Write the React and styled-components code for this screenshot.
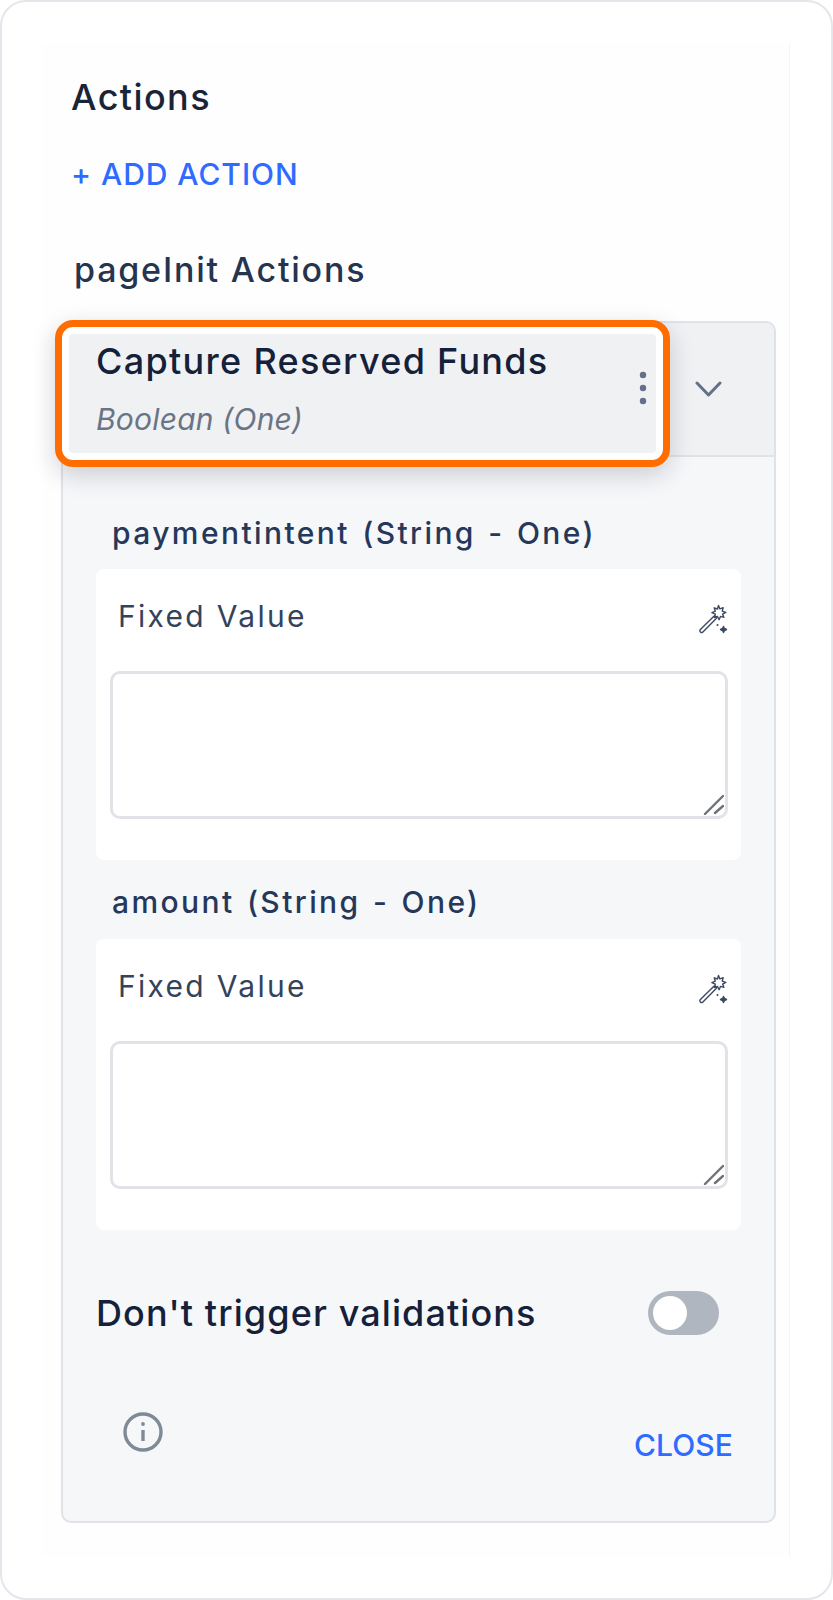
import React from 'react'
import styled, { createGlobalStyle } from 'styled-components'

const GlobalStyle = createGlobalStyle`
  body {
    margin: 0;
    background: #fff;
    font-family: Inter, "Liberation Sans", sans-serif;
  }
`

const Frame = styled.div`
  box-sizing: border-box;
  width: 833px;
  height: 1600px;
  padding: 41px 41px 41px 40px;
  border: 2px solid #e3e6ea;
  border-radius: 26px;
  background: #fff;
`

const Sidebar = styled.aside`
  box-sizing: border-box;
  height: 100%;
  padding: 32px 13px 0 19px;
  background: #fefefe;
  border-right: 1px solid #f3f4f6;
`

const Title = styled.h2`
  margin: 0 0 37px 10px;
  font-size: 36px;
  line-height: 44px;
  font-weight: 450;
  letter-spacing: 1.4px;
  color: #1a2438;
`

const TextButton = styled.button`
  display: block;
  padding: 0;
  border: 0;
  background: none;
  font: inherit;
  font-size: 30px;
  line-height: 36px;
  font-weight: 450;
  letter-spacing: ${({ $wide }) => ($wide ? '0.95px' : '0.1px')};
  color: #2f6bff;
`

const AddButton = styled(TextButton)`
  margin-left: 10px;
`

const Subtitle = styled.h3`
  margin: 58px 0 31px 13px;
  font-size: 34px;
  line-height: 40px;
  font-weight: 450;
  letter-spacing: 1.8px;
  color: #25344f;
`

const Panel = styled.section`
  border: 2px solid #dfe2e7;
  border-radius: 10px;
  background: #f6f7f9;
`

const PanelHeader = styled.header`
  display: flex;
  align-items: flex-start;
  box-sizing: border-box;
  height: 134px;
  padding: 11px 0 0 6px;
  background: #f0f1f3;
  border-bottom: 2px solid #dfe2e7;
  border-radius: 8px 8px 0 0;
`

const ActionRow = styled.div`
  position: relative;
  display: flex;
  align-items: center;
  justify-content: space-between;
  box-sizing: border-box;
  width: 587px;
  height: 119px;
  padding: 5px 9px 16px 27px;
  background: #f0f1f3;
  border-radius: 4px;

  &::after {
    content: '';
    position: absolute;
    inset: -14px;
    border: 7px solid #ff6d00;
    border-radius: 18px;
    box-shadow: 0 8px 24px rgba(15, 23, 42, 0.18), inset 0 0 0 7px #fff;
  }
`

const ActionName = styled.div`
  font-size: 36px;
  line-height: 44px;
  font-weight: 450;
  letter-spacing: 1.3px;
  color: #15213a;
`

const ActionType = styled.div`
  margin-top: 18px;
  font-size: 30px;
  line-height: 36px;
  font-style: italic;
  letter-spacing: 0.2px;
  color: #6b7485;
`

const Chevron = styled.svg`
  margin: 47px 0 0 39px;
`

const PanelBody = styled.div`
  padding: 58px 33px 58px;
`

const FieldLabel = styled.div`
  margin: ${({ $first }) => ($first ? '0 0 18px' : '24px 0 19px')} 16px;
  font-size: 30px;
  line-height: 36px;
  font-weight: 450;
  letter-spacing: 2.4px;
  word-spacing: 2px;
  color: #26385a;
`

const FieldCard = styled.div`
  padding: 29px 13px 41px 14px;
  background: #fff;
  border-radius: 8px;
`

const FieldHead = styled.div`
  display: flex;
  align-items: flex-start;
  justify-content: space-between;
  margin-bottom: 37px;
  padding-left: 8px;
  font-size: 30px;
  line-height: 36px;
  letter-spacing: 2.3px;
  color: #34435c;
`

const WandIcon = styled.svg`
  margin-top: 6px;
`

const AreaWrap = styled.div`
  position: relative;
  height: 148px;
`

const Area = styled.textarea`
  display: block;
  box-sizing: border-box;
  width: 100%;
  height: 100%;
  border: 3px solid #e1e3e8;
  border-radius: 10px;
  background: #fff;
  resize: none;
  outline: none;
`

const Grip = styled.svg`
  position: absolute;
  right: 4px;
  bottom: 4px;
`

const ToggleRow = styled.div`
  display: flex;
  align-items: center;
  justify-content: space-between;
  margin-top: 61px;
  padding-right: 22px;
  font-size: 36px;
  line-height: 44px;
  font-weight: 450;
  letter-spacing: 1.1px;
  color: #15213a;
`

const Toggle = styled.span`
  display: flex;
  align-items: center;
  box-sizing: border-box;
  width: 71px;
  height: 44px;
  padding-left: 5px;
  border-radius: 22px;
  background: #b0b6c0;

  &::before {
    content: '';
    width: 34px;
    height: 34px;
    border-radius: 50%;
    background: #fff;
  }
`

const Footer = styled.div`
  display: flex;
  align-items: flex-end;
  justify-content: space-between;
  height: 51px;
  margin-top: 77px;
  padding: 0 8px 0 27px;
`

const InfoIcon = styled.svg`
  align-self: flex-start;
`

const Dots = () => (
  <svg width="8" height="34" viewBox="0 0 8 34" fill="#64708a">
    <circle cx="4" cy="4" r="3.2" />
    <circle cx="4" cy="17" r="3.2" />
    <circle cx="4" cy="30" r="3.2" />
  </svg>
)

const Wand = () => (
  <WandIcon width="30" height="30" viewBox="0 0 30 30" fill="none" stroke="#3c4a64" strokeWidth="1.4" strokeLinejoin="round">
    <path d="M2.4 25.4 15.6 12.4a1.6 1.6 0 0 1 2.2 0l.2.2a1.6 1.6 0 0 1 0 2.2L4.9 28a1.8 1.8 0 0 1-2.5 0 1.8 1.8 0 0 1 0-2.6Z" />
    <path d="M20.5 1.5l1.4 3.4 3.3-1.2-1 3.4 3.6 1.3-3.2 1.7 1.3 3.3-3.4-1-1.4 3.3-1.6-3.2-3.3 1.1 1.1-3.4-3.4-1.5 3.4-1.5-1.1-3.4 3.3 1.2Z" />
    <path d="M25.5 22.5l1 2 2 1-2 1-1 2-1-2-2-1 2-1Z" fill="#3c4a64" />
    <circle cx="19.5" cy="21" r="1" fill="#3c4a64" stroke="none" />
  </WandIcon>
)

const ResizeGrip = () => (
  <Grip width="22" height="22" viewBox="0 0 22 22" stroke="#6f7277" strokeWidth="2.4" strokeLinecap="round">
    <path d="M3 21 21 3" />
    <path d="M13 20 21 13" />
  </Grip>
)

const Field = ({ label, first }) => (
  <>
    <FieldLabel $first={first}>{label}</FieldLabel>
    <FieldCard>
      <FieldHead>
        Fixed Value
        <Wand />
      </FieldHead>
      <AreaWrap>
        <Area />
        <ResizeGrip />
      </AreaWrap>
    </FieldCard>
  </>
)

const App = () => {
  return (
    <Frame>
      <GlobalStyle />
      <Sidebar>
        <Title>Actions</Title>
        <AddButton $wide>+ ADD ACTION</AddButton>
        <Subtitle>pageInit Actions</Subtitle>
        <Panel>
          <PanelHeader>
            <ActionRow>
              <div>
                <ActionName>Capture Reserved Funds</ActionName>
                <ActionType>Boolean (One)</ActionType>
              </div>
              <Dots />
            </ActionRow>
            <Chevron width="27" height="16" viewBox="0 0 27 16" fill="none" stroke="#64708a" strokeWidth="3" strokeLinecap="round" strokeLinejoin="round">
              <path d="M2 2 13.5 14 25 2" />
            </Chevron>
          </PanelHeader>
          <PanelBody>
            <Field first label="paymentintent (String - One)" />
            <Field label="amount (String - One)" />
            <ToggleRow>
              Don't trigger validations
              <Toggle />
            </ToggleRow>
            <Footer>
              <InfoIcon width="40" height="40" viewBox="0 0 40 40" fill="none" stroke="#808a97" strokeWidth="3.4">
                <circle cx="20" cy="20" r="18" />
                <path d="M20 18v11" />
                <circle cx="20" cy="12" r="1.9" fill="#808a97" stroke="none" />
              </InfoIcon>
              <TextButton>CLOSE</TextButton>
            </Footer>
          </PanelBody>
        </Panel>
      </Sidebar>
    </Frame>
  )
}

export default App
